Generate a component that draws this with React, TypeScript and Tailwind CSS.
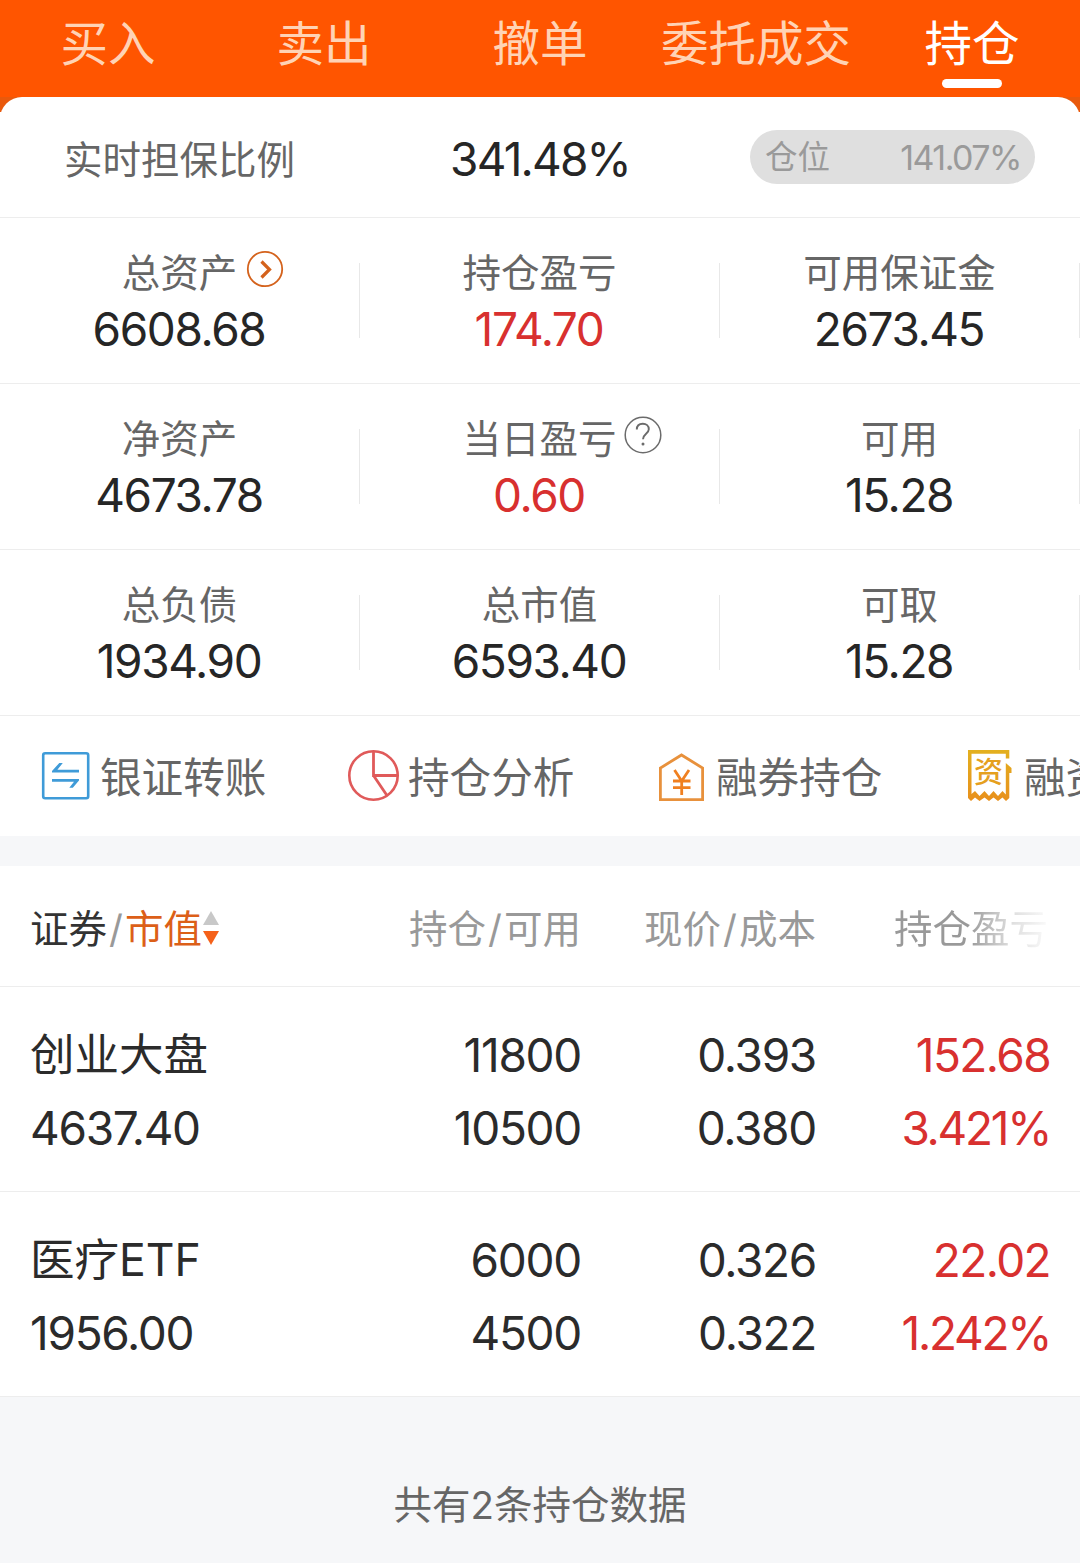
import React from "react";
import clsx from "clsx";

const tabs = ["买入", "卖出", "撤单", "委托成交", "持仓"];

type Stat = {
  label: string;
  value: string;
  red?: boolean;
  icon?: "arrow" | "help";
};

const stats: Stat[][] = [
  [
    { label: "总资产", value: "6608.68", icon: "arrow" },
    { label: "持仓盈亏", value: "174.70", red: true },
    { label: "可用保证金", value: "2673.45" },
  ],
  [
    { label: "净资产", value: "4673.78" },
    { label: "当日盈亏", value: "0.60", red: true, icon: "help" },
    { label: "可用", value: "15.28" },
  ],
  [
    { label: "总负债", value: "1934.90" },
    { label: "总市值", value: "6593.40" },
    { label: "可取", value: "15.28" },
  ],
];

const holdings = [
  {
    name: "创业大盘",
    marketValue: "4637.40",
    amount: "11800",
    available: "10500",
    price: "0.393",
    cost: "0.380",
    profit: "152.68",
    rate: "3.421%",
  },
  {
    name: "医疗ETF",
    marketValue: "1956.00",
    amount: "6000",
    available: "4500",
    price: "0.326",
    cost: "0.322",
    profit: "22.02",
    rate: "1.242%",
  },
];

const ArrowIcon = () => (
  <svg width="38" height="38" viewBox="0 0 38 38" fill="none" stroke="#d4621c">
    <circle cx="19" cy="19" r="17.2" strokeWidth="1.8" />
    <path d="M15.5 11.5 L23.5 19.5 L15.5 27.5" strokeWidth="3.2" />
  </svg>
);

const HelpIcon = () => (
  <svg width="38" height="38" viewBox="0 0 38 38" fill="none" stroke="#6b6b6b">
    <circle cx="19" cy="19" r="17.8" strokeWidth="1.5" />
    <path
      d="M12.8 13.6 C12.8 9.8 15.3 7.8 18.8 7.8 C22.3 7.8 24.8 10 24.8 13.2 C24.8 17.6 19 18 19 23.2"
      strokeWidth="1.9"
    />
    <circle cx="19" cy="28" r="1.5" fill="#6b6b6b" stroke="none" />
  </svg>
);

const TransferIcon = () => (
  <svg width="60" height="60" viewBox="0 0 60 60" fill="none" stroke="#3f9bd8">
    <rect x="8.2" y="7.2" width="45" height="45" rx="2" strokeWidth="2.6" />
    <path d="M17 26.6 V25 L24.3 17 H27.8 L22.4 23.8 H44 V26.6 Z" fill="#3f9bd8" stroke="none" />
    <path d="M44 33 V34.5 L37.8 41.8 H34.3 L39 35.8 H17 V33 Z" fill="#3f9bd8" stroke="none" />
  </svg>
);

const PieIcon = () => (
  <svg width="60" height="60" viewBox="0 0 60 60" fill="none" stroke="#e05a5a">
    <circle cx="30.5" cy="29.5" r="24.2" strokeWidth="2.6" />
    <path d="M30.5 5 V29.5 H55 M30.5 29.5 L44 49.5" strokeWidth="2.8" />
  </svg>
);

const HouseIcon = () => (
  <svg width="60" height="60" viewBox="0 0 60 60" fill="none" stroke="#e8913c">
    <path d="M9.4 53.6 V22 L30.5 9 L51.6 22 V53.6 Z" strokeWidth="2.8" />
    <path
      d="M23.5 24 L30.7 35 L38 24 M30.7 35 V49 M22 35 H39.5 M22 41.6 H39.5"
      stroke="#f08020"
      strokeWidth="2.8"
    />
  </svg>
);

const ReceiptIcon = () => (
  <svg width="60" height="60" viewBox="0 0 60 60" fill="none">
    <defs>
      <linearGradient id="gold" x1="0" y1="0" x2="0" y2="1">
        <stop offset="0" stopColor="#e3b01f" />
        <stop offset="1" stopColor="#e8901c" />
      </linearGradient>
    </defs>
    <path
      d="M9 4 H50.3 V12.5 H46.8 V7.8 H12.5 V48 L16 45 L20.5 50 L25.5 45 L30 50 L34.5 45 L39 50 L43.5 45 L46.8 48.5 V17 L52.5 22 V27 H50.3 V52 L47 55 L43.5 51.5 L39 55 L34.5 51.5 L30 55 L25.5 51.5 L20.5 55 L16 51.5 L12 55 L9 52 Z"
      fill="url(#gold)"
    />
    <text
      x="29.5"
      y="36.5"
      textAnchor="middle"
      fontSize="29"
      fontWeight="500"
      fill="#e5a01e"
      fontFamily="'Noto Sans CJK SC', sans-serif"
    >
      资
    </text>
  </svg>
);

const shortcuts = [
  { label: "银证转账", Icon: TransferIcon },
  { label: "持仓分析", Icon: PieIcon },
  { label: "融券持仓", Icon: HouseIcon },
  { label: "融资持仓", Icon: ReceiptIcon },
];

const StatCell: React.FC<{ stat: Stat }> = ({ stat }) => (
  <div className="relative flex h-[165px] flex-col items-center pt-[27px] pr-px">
    <div className="relative text-[38.5px] leading-[56px] text-[#666]">
      {stat.label}
      {stat.icon && (
        <span
          className={clsx(
            "absolute top-[5px] left-full",
            stat.icon === "arrow" ? "ml-[9px]" : "ml-[7px]"
          )}
        >
          {stat.icon === "arrow" ? <ArrowIcon /> : <HelpIcon />}
        </span>
      )}
    </div>
    <div
      className={clsx(
        "-mt-px pr-px text-[46px] leading-[58px] tracking-[-1.4px]",
        stat.red ? "text-[#d8302f]" : "text-[#262626]"
      )}
    >
      {stat.value}
    </div>
    <span className="absolute top-[45px] right-0 h-[75px] w-px bg-[#e8e8e8]" />
  </div>
);

const NumberPair: React.FC<{ top: string; bottom: string; red?: boolean }> = ({
  top,
  bottom,
  red,
}) => (
  <div
    className={clsx(
      "text-right",
      red
        ? "tracking-[-1.6px] text-[#d8302f]"
        : "pr-px tracking-[-1.3px] text-[#2b2b2b]"
    )}
  >
    <div>{top}</div>
    <div className={clsx(red && "tracking-[-2.3px]")}>{bottom}</div>
  </div>
);

export default function App() {
  return (
    <div className="h-[1563px] w-[1080px] overflow-hidden bg-[#f6f7f9] font-['Inter','Noto_Sans_CJK_SC',sans-serif] font-normal">
      <div className="bg-[#ff5500]">
        <nav className="grid h-[97px] grid-cols-5">
          {tabs.map((tab, i) => {
            const active = i === tabs.length - 1;
            return (
              <div
                key={tab}
                className={clsx(
                  "flex flex-col items-center text-[47.5px] leading-[87px] whitespace-nowrap",
                  active ? "text-white" : "text-[#ffd3b5]"
                )}
              >
                <span className="h-[79px]">{tab}</span>
                {active && (
                  <span className="h-[9px] w-[60px] shrink-0 rounded-full bg-white" />
                )}
              </div>
            );
          })}
        </nav>
      </div>

      <div className="bg-[linear-gradient(#e9590c_15px,#fff_15px)]">
        <div className="grid h-[121px] grid-cols-3 items-center rounded-t-[22px] border-b border-[#ededed] bg-white pb-px">
          <div className="pt-[8px] pl-[64px] text-[38.5px] text-[#666]">
            实时担保比例
          </div>
          <div className="pt-[5px] text-center text-[46px] tracking-[-1.8px] text-[#262626]">
            341.48%
          </div>
          <div className="mr-[45px] ml-[30px] flex h-[54px] items-center justify-between rounded-full bg-[#dfdfdf] pr-[14px] pl-[15px] text-[#9a9a9a]">
            <span className="pt-[4px] text-[32.5px]">仓位</span>
            <span className="pt-px text-[34px] tracking-[-1.5px]">141.07%</span>
          </div>
        </div>
      </div>

      <div className="bg-white">
        {stats.map((row, i) => (
          <div key={i} className="grid grid-cols-3 border-b border-[#ededed]">
            {row.map((stat) => (
              <StatCell key={stat.label} stat={stat} />
            ))}
          </div>
        ))}
        <div className="flex h-[120px] items-center overflow-hidden pl-[35px]">
          {shortcuts.map(({ label, Icon }) => (
            <div
              key={label}
              className="flex w-[308px] shrink-0 items-center text-[41.6px] whitespace-nowrap text-[#666]"
            >
              <Icon />
              <span className="ml-[5px] pt-[5px]">{label}</span>
            </div>
          ))}
        </div>
      </div>

      <div className="mt-[30px] bg-white">
        <div className="grid h-[121px] grid-cols-[317px_235px_235px_233px] items-center border-b border-[#ededed] px-[30px] pt-[7px] text-[38.5px] text-[#999]">
          <div className="flex items-center">
            <span className="text-[#333]">证券</span>
            <span className="mx-[2px]">/</span>
            <span className="text-[#dc5f18]">市值</span>
            <svg className="mb-[4px]" width="18" height="36" viewBox="0 0 18 36">
              <path d="M9 1 L17 15 H1 Z" fill="#c8c8c8" />
              <path d="M9 35 L17 21 H1 Z" fill="#f5611a" />
            </svg>
          </div>
          <div className="pr-px text-right">
            持仓<span className="mx-[2px]">/</span>可用
          </div>
          <div className="pr-px text-right">
            现价<span className="mx-[2px]">/</span>成本
          </div>
          <div className="bg-[linear-gradient(90deg,#999_65%,#ddd_83%,#fff_102%)] bg-clip-text pr-[2px] text-right text-transparent">
            持仓盈亏
          </div>
        </div>
        {holdings.map((item) => (
          <div
            key={item.name}
            className="grid h-[205px] grid-cols-[317px_235px_235px_233px] border-b border-[#ededed] px-[30px] pt-[32px] text-[46px] leading-[73px] text-[#2b2b2b]"
          >
            <div>
              <div className="text-[44.5px] leading-[73px]">{item.name}</div>
              <div className="tracking-[-1.3px]">{item.marketValue}</div>
            </div>
            <NumberPair top={item.amount} bottom={item.available} />
            <NumberPair top={item.price} bottom={item.cost} />
            <NumberPair top={item.profit} bottom={item.rate} red />
          </div>
        ))}
      </div>

      <div className="pt-[78px] text-center text-[38.5px] leading-[60px] text-[#666]">
        共有2条持仓数据
      </div>
    </div>
  );
}
